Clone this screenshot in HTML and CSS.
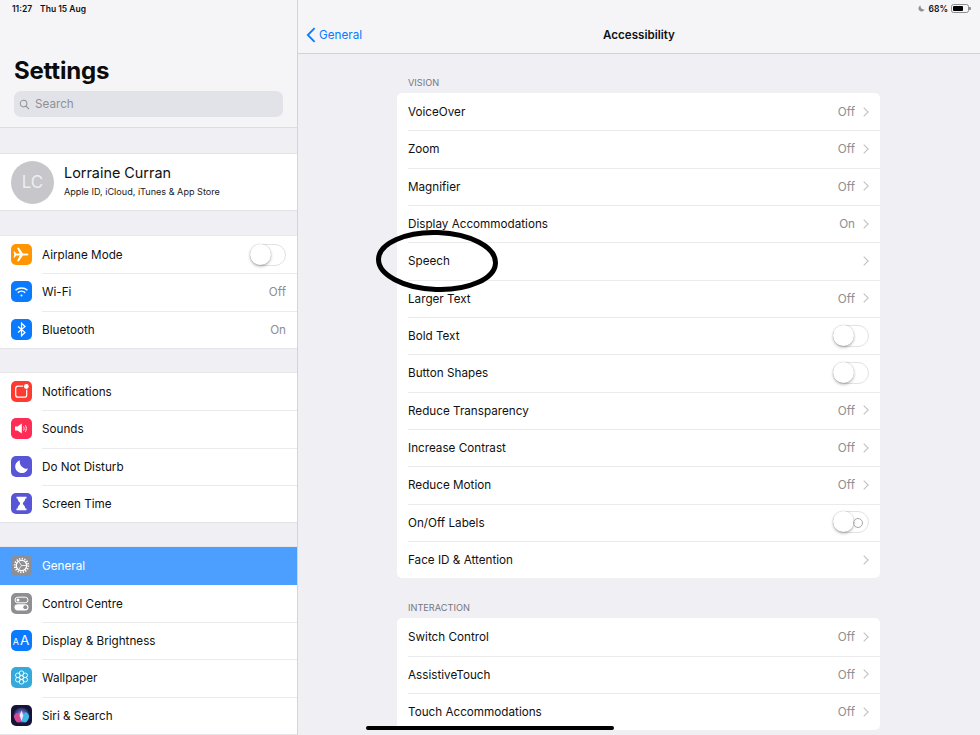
FILE: index.html
```html
<!DOCTYPE html>
<html lang="en">
<head>
<meta charset="utf-8">
<title>Accessibility</title>
<link rel="stylesheet" href="styles.css">
</head>
<body>
<div class="app">
  <aside class="sidebar">
    <header class="side-head">
      <div class="status"><span>11:27</span><span>Thu 15 Aug</span></div>
      <h1 class="title">Settings</h1>
      <div class="search">
        <svg class="search-icon" viewBox="0 0 12 12"><circle cx="5" cy="5" r="3.6"/><path d="M7.7 7.7 11 11"/></svg>
        <span>Search</span>
      </div>
    </header>
    <section class="profile">
      <div class="avatar">LC</div>
      <div class="who">
        <div class="name">Lorraine Curran</div>
        <div class="sub">Apple ID, iCloud, iTunes &amp; App Store</div>
      </div>
    </section>
    <section class="side-group">
      <div class="s-row">
        <span class="ico orange"><svg viewBox="0 0 21 21"><path fill="#fff" d="M3.5 9.5h5.2L6 3.8h1.900l4 5.700h3.600c1 0 1.900.4 1.900 1s-.9 1-1.900 1h-3.600l-4 5.700H6l2.700-5.700H3.500z"/><path fill="#fff" d="M2.600 7.500h1.300l1.500 3-1.500 3H2.600l.8-3z"/></svg></span>
        <span class="s-label">Airplane Mode</span>
        <span class="toggle"></span>
      </div>
      <div class="s-row">
        <span class="ico blue"><svg viewBox="0 0 21 21" fill="none" stroke="#fff" stroke-width="1.500"><path d="M4.500 9.300c3.400-3 8.600-3 12 0"/><path d="M6.800 11.600c2.100-1.800 5.300-1.800 7.400 0"/><circle cx="10.500" cy="14.400" r="1" fill="#fff" stroke="none"/></svg></span>
        <span class="s-label">Wi-Fi</span>
        <span class="s-value">Off</span>
      </div>
      <div class="s-row">
        <span class="ico blue"><svg viewBox="0 0 21 21" fill="none" stroke="#fff" stroke-width="1.200"><path d="M7 7.500l7 6-3.500 3.300V4.200L14 7.500l-7 6"/></svg></span>
        <span class="s-label">Bluetooth</span>
        <span class="s-value">On</span>
      </div>
    </section>
    <section class="side-group">
      <div class="s-row">
        <span class="ico red"><svg viewBox="0 0 21 21"><rect x="4.700" y="5.200" width="11" height="11" rx="2.300" fill="none" stroke="#fff" stroke-width="1.200"/><circle cx="15.300" cy="5.500" r="3.200" fill="#ff3b30"/><circle cx="15.300" cy="5.500" r="2.400" fill="#fff"/></svg></span>
        <span class="s-label">Notifications</span>
      </div>
      <div class="s-row">
        <span class="ico pink"><svg viewBox="0 0 21 21"><path fill="#fff" d="M4 8.500h2.500L10.800 5.500v10L6.500 12.500H4z"/><path fill="none" stroke="#fff" stroke-width=".9" d="M12.500 8.500c.8 1.300.8 2.700 0 4M14.300 7.200c1.300 2 1.300 4.600 0 6.600"/></svg></span>
        <span class="s-label">Sounds</span>
      </div>
      <div class="s-row">
        <span class="ico indigo"><svg viewBox="0 0 21 21"><path fill="#fff" d="M9 4.300a6.500 6.500 0 1 0 7.900 8.300A6.800 6.800 0 0 1 9 4.300z"/></svg></span>
        <span class="s-label">Do Not Disturb</span>
      </div>
      <div class="s-row">
        <span class="ico indigo"><svg viewBox="0 0 21 21"><path fill="#fff" d="M5.500 3.800h10v1.700h-1.200c0 3-2.400 3.600-2.400 5s2.400 2 2.400 5h1.200v1.700h-10v-1.700h1.200c0-3 2.400-3.600 2.400-5s-2.400-2-2.400-5H5.500z"/></svg></span>
        <span class="s-label">Screen Time</span>
      </div>
    </section>
    <section class="side-group last">
      <div class="s-row selected">
        <span class="ico gray"><svg viewBox="0 0 21 21" fill="none" stroke="#fff"><circle cx="10.500" cy="10.500" r="5.200" stroke-width="1.300"/><circle cx="10.500" cy="10.500" r="6.800" stroke-width="1.800" stroke-dasharray="1.300 1.370"/><path stroke-width=".8" d="M10.500 10.500 7.600 6.300M10.500 10.500H15.500M10.500 10.500 7.600 14.700"/></svg></span>
        <span class="s-label">General</span>
      </div>
      <div class="s-row">
        <span class="ico gray"><svg viewBox="0 0 21 21"><rect x="4" y="4.200" width="13" height="5.600" rx="2.800" fill="none" stroke="#fff" stroke-width="1"/><circle cx="7" cy="7" r="1.500" fill="#fff"/><rect x="3.500" y="11.200" width="14" height="6.200" rx="3.100" fill="#fff"/><circle cx="14.300" cy="14.300" r="2" fill="#8e8e93"/></svg></span>
        <span class="s-label">Control Centre</span>
      </div>
      <div class="s-row">
        <span class="ico blue aa"><span class="aa-s">A</span><span class="aa-l">A</span></span>
        <span class="s-label">Display &amp; Brightness</span>
      </div>
      <div class="s-row">
        <span class="ico teal"><svg viewBox="0 0 21 21" fill="none" stroke="#fff" stroke-width=".9"><circle cx="10.500" cy="10.500" r="2"/><circle cx="10.500" cy="6.200" r="2.300"/><circle cx="10.500" cy="14.800" r="2.300"/><circle cx="6.800" cy="8.300" r="2.300"/><circle cx="14.200" cy="8.300" r="2.300"/><circle cx="6.800" cy="12.700" r="2.300"/><circle cx="14.200" cy="12.700" r="2.300"/></svg></span>
        <span class="s-label">Wallpaper</span>
      </div>
      <div class="s-row">
        <span class="ico siri"><svg viewBox="0 0 21 21"><defs><radialGradient id="siriGlow" cx="50%" cy="50%" r="50%"><stop offset="0" stop-color="#c9c9f0"/><stop offset=".55" stop-color="#5a5ab8"/><stop offset="1" stop-color="#26264f"/></radialGradient></defs><circle cx="10.500" cy="10.500" r="8" fill="url(#siriGlow)"/><path fill="#d9488f" d="M2.800 11c2-3.500 3.600-4 5-1.500l2.700 7-4 1C4.500 16.500 3.300 13.500 2.800 11z"/><path fill="#3fb7e8" d="M18.200 11c-1.500-3.500-3.600-5-5-2.500l-2.700 8 4 1c2-1 3.200-3.500 3.700-6.500z"/><path fill="#eaeaf8" d="M10.500 5.500l1.700 5-1.700 6-1.700-6z"/></svg></span>
        <span class="s-label">Siri &amp; Search</span>
      </div>
    </section>
  </aside>
  <main class="detail">
    <header class="nav">
      <div class="status-right">
        <svg class="moon" viewBox="0 0 8 8"><path d="M3 .5a3.600 3.600 0 1 0 4.500 4.700A3.900 3.900 0 0 1 3 .500z"/></svg>
        <span>68%</span>
        <span class="battery"><span class="battery-fill"></span></span>
      </div>
      <div class="nav-bar">
        <a class="back">
          <svg class="back-icon" viewBox="0 0 10 16"><path d="M8.600 1.200 1.800 8l6.800 6.800"/></svg>
          <span>General</span>
        </a>
        <h2 class="nav-title">Accessibility</h2>
      </div>
    </header>
    <div class="content">
      <h3 class="sec-label">VISION</h3>
      <section class="card">
        <div class="row"><span class="label">VoiceOver</span><span class="value">Off</span><svg class="chev" viewBox="0 0 6 10"><path d="M.7.7 5.200 5 .7 9.300"/></svg></div>
        <div class="row"><span class="label">Zoom</span><span class="value">Off</span><svg class="chev" viewBox="0 0 6 10"><path d="M.7.7 5.200 5 .7 9.300"/></svg></div>
        <div class="row"><span class="label">Magnifier</span><span class="value">Off</span><svg class="chev" viewBox="0 0 6 10"><path d="M.7.7 5.200 5 .7 9.300"/></svg></div>
        <div class="row"><span class="label">Display Accommodations</span><span class="value">On</span><svg class="chev" viewBox="0 0 6 10"><path d="M.7.7 5.200 5 .7 9.300"/></svg></div>
        <div class="row"><span class="label">Speech</span><svg class="chev" viewBox="0 0 6 10"><path d="M.7.7 5.200 5 .7 9.300"/></svg></div>
        <div class="row"><span class="label">Larger Text</span><span class="value">Off</span><svg class="chev" viewBox="0 0 6 10"><path d="M.7.7 5.200 5 .7 9.300"/></svg></div>
        <div class="row"><span class="label">Bold Text</span><span class="toggle"></span></div>
        <div class="row"><span class="label">Button Shapes</span><span class="toggle"></span></div>
        <div class="row"><span class="label">Reduce Transparency</span><span class="value">Off</span><svg class="chev" viewBox="0 0 6 10"><path d="M.7.7 5.200 5 .7 9.300"/></svg></div>
        <div class="row"><span class="label">Increase Contrast</span><span class="value">Off</span><svg class="chev" viewBox="0 0 6 10"><path d="M.7.7 5.200 5 .7 9.300"/></svg></div>
        <div class="row"><span class="label">Reduce Motion</span><span class="value">Off</span><svg class="chev" viewBox="0 0 6 10"><path d="M.7.7 5.200 5 .7 9.300"/></svg></div>
        <div class="row"><span class="label">On/Off Labels</span><span class="toggle labelled"></span></div>
        <div class="row"><span class="label">Face ID &amp; Attention</span><svg class="chev" viewBox="0 0 6 10"><path d="M.7.7 5.200 5 .7 9.300"/></svg></div>
      </section>
      <h3 class="sec-label second">INTERACTION</h3>
      <section class="card">
        <div class="row"><span class="label">Switch Control</span><span class="value">Off</span><svg class="chev" viewBox="0 0 6 10"><path d="M.7.7 5.200 5 .7 9.300"/></svg></div>
        <div class="row"><span class="label">AssistiveTouch</span><span class="value">Off</span><svg class="chev" viewBox="0 0 6 10"><path d="M.7.7 5.200 5 .7 9.300"/></svg></div>
        <div class="row"><span class="label">Touch Accommodations</span><span class="value">Off</span><svg class="chev" viewBox="0 0 6 10"><path d="M.7.7 5.200 5 .7 9.300"/></svg></div>
      </section>
    </div>
  </main>
  <svg class="circle" viewBox="0 0 126 68"><ellipse cx="63" cy="34" rx="58.500" ry="28.500" transform="rotate(2 63 34)"/></svg>
  <div class="home"></div>
</div>
</body>
</html>
```
FILE: styles.css
```css
* { box-sizing: border-box; }
html, body { margin: 0; padding: 0; }
body {
  width: 980px;
  height: 735px;
  overflow: hidden;
  font-family: Inter, "Liberation Sans", sans-serif;
  color: #111;
  background: #efeff4;
}
.app { position: relative; display: flex; width: 980px; height: 735px; overflow: hidden; }

/* Sidebar */
.sidebar {
  flex: 0 0 298px;
  height: 735px;
  overflow: hidden;
  background: #efeff4;
  border-right: 1px solid #d4d4d8;
}
.side-head {
  height: 128px;
  padding: 5px 14px 0;
  background: #f5f5f8;
  border-bottom: 1px solid #dddde0;
}
.status { display: flex; gap: 8px; margin-left: -2px; font-size: 8.5px; line-height: 8px; font-weight: 600; height: 8px; }
.title { margin: 43px 0 0; font-size: 24px; line-height: 30px; font-weight: 700; color: #0b0b0b; letter-spacing: -.2px; height: 30px; }
.search {
  display: flex;
  align-items: center;
  gap: 5px;
  width: 269px;
  height: 26px;
  margin-top: 5px;
  padding-left: 5px;
  border-radius: 7px;
  background: #e2e3e8;
  color: #8f9097;
  font-size: 11.700px;
}
.search-icon { width: 11px; height: 11px; fill: none; stroke: #8f9097; stroke-width: 1.100; }
.profile {
  display: flex;
  align-items: center;
  gap: 10px;
  height: 58px;
  margin-top: 25px;
  padding-left: 11px;
  background: #fff;
  box-shadow: inset 0 1px 0 #e4e4e8, inset 0 -1px 0 #e4e4e8;
}
.avatar {
  display: flex;
  align-items: center;
  justify-content: center;
  width: 43px;
  height: 43px;
  border-radius: 50%;
  background: #c6c6cb;
  color: #eeeef0;
  font-size: 17px;
}
.who { margin-top: -4px; }
.name { font-size: 14.400px; line-height: 18px; color: #111; }
.sub { margin-top: 4px; font-size: 9.100px; line-height: 11px; color: #222; }
.side-group { margin-top: 25px; background: #fff; box-shadow: 0 1px 0 #e4e4e8, 0 -1px 0 #e8e8ec; }
.s-row {
  position: relative;
  display: flex;
  align-items: center;
  height: 37.330px;
  padding: 0 11px 0 10.500px;
}
.s-row + .s-row::before {
  content: "";
  position: absolute;
  left: 42px;
  right: 0;
  top: 0;
  height: 1px;
  background: #ebebee;
}
.s-row.selected { background: #4c9ffe; color: #fff; }
.s-row.selected + .s-row::before { display: none; }
.ico { flex: 0 0 21px; display: block; width: 21px; height: 21px; border-radius: 5px; overflow: hidden; }
.ico svg { display: block; width: 21px; height: 21px; }
.orange { background: #ff9500; }
.blue { background: #0a7aff; }
.red { background: #ff3b30; }
.pink { background: #ff2d55; }
.indigo { background: #5856d6; }
.gray { background: #8e8e93; }
.teal { background: #34aadc; }
.siri { background: #14143a; }
.aa { display: flex; align-items: baseline; justify-content: center; gap: 1px; padding-top: 3px; color: #fff; line-height: 14px; }
.aa-s { font-size: 9px; }
.aa-l { font-size: 13.500px; }
.s-label { flex: 1; margin-left: 10.500px; padding-top: 1px; font-size: 11.700px; white-space: nowrap; }
.s-value { padding-top: 1px; font-size: 11.700px; color: #8e8e93; }

/* Toggles */
.toggle {
  position: relative;
  display: block;
  flex: 0 0 36px;
  width: 36px;
  height: 22px;
  border-radius: 11px;
  background: #fff;
  border: 1px solid #e2e2e4;
}
.toggle::before {
  content: "";
  position: absolute;
  left: -1px;
  top: -1px;
  width: 21px;
  height: 21px;
  border-radius: 50%;
  background: #fff;
  box-shadow: 0 1.500px 3px rgba(0, 0, 0, .28), 0 0 1px rgba(0, 0, 0, .25);
}
.toggle.labelled::after {
  content: "";
  position: absolute;
  right: 5px;
  top: 6px;
  width: 8px;
  height: 8px;
  border-radius: 50%;
  border: 1px solid #a8a8ac;
}

/* Detail */
.detail { flex: 1; min-width: 0; height: 735px; overflow: hidden; }
.nav { height: 54px; background: #f5f5f8; border-bottom: 1px solid #d2d2d6; padding: 4px 10px 0 0; }
.status-right { display: flex; align-items: center; justify-content: flex-end; gap: 3px; height: 9px; font-size: 8.500px; font-weight: 600; }
.moon { width: 7px; height: 7px; margin-right: 1px; fill: #8f8f94; }
.battery {
  display: block;
  position: relative;
  width: 18px;
  height: 9px;
  border: 1px solid #8d8d90;
  border-radius: 2.500px;
  padding: 1px;
  margin-right: 1px;
}
.battery::after { content: ""; position: absolute; right: -3px; top: 2px; width: 2px; height: 3px; border-radius: 0 1px 1px 0; background: #8d8d90; }
.battery-fill { display: block; width: 68%; height: 100%; background: #000; border-radius: 1px; }
.nav-bar { position: relative; display: flex; align-items: center; justify-content: center; height: 36px; margin-top: 4px; margin-right: -10px; }
.back { position: absolute; left: 8px; top: 0; display: flex; align-items: center; gap: 3px; height: 36px; color: #0a7aff; font-size: 11.700px; }
.back-icon { width: 10px; height: 16px; fill: none; stroke: #0a7aff; stroke-width: 1.800; }
.nav-title { margin: 0; font-size: 11.600px; font-weight: 600; color: #111; }
.content { padding: 0 100px 0 99px; }
.sec-label { margin: 0; padding: 23px 0 0 11px; height: 39px; font-size: 9.200px; line-height: 11px; font-weight: 400; color: #77777c; }
.sec-label.second { height: 40px; padding-top: 24px; }
.card { background: #fff; border-radius: 5px; overflow: hidden; }
.row {
  position: relative;
  display: flex;
  align-items: center;
  height: 37.330px;
  padding: 0 11px;
  font-size: 11.700px;
}
.row + .row::before {
  content: "";
  position: absolute;
  left: 11px;
  right: 0;
  top: 0;
  height: 1px;
  background: #ebebee;
}
.label { flex: 1; white-space: nowrap; padding-top: 1px; }
.value { color: #8e8e93; padding-top: 1px; }
.chev { flex: 0 0 6px; width: 6px; height: 10px; margin-left: 8px; fill: none; stroke: #c2c2c6; stroke-width: 1.100; }

/* Overlays */
.circle {
  position: absolute;
  left: 374px;
  top: 227px;
  width: 126px;
  height: 68px;
  fill: none;
  stroke: #000;
  stroke-width: 5px;
}
.home {
  position: absolute;
  left: 366px;
  top: 726px;
  width: 248px;
  height: 4px;
  border-radius: 2px;
  background: #000;
}
```
